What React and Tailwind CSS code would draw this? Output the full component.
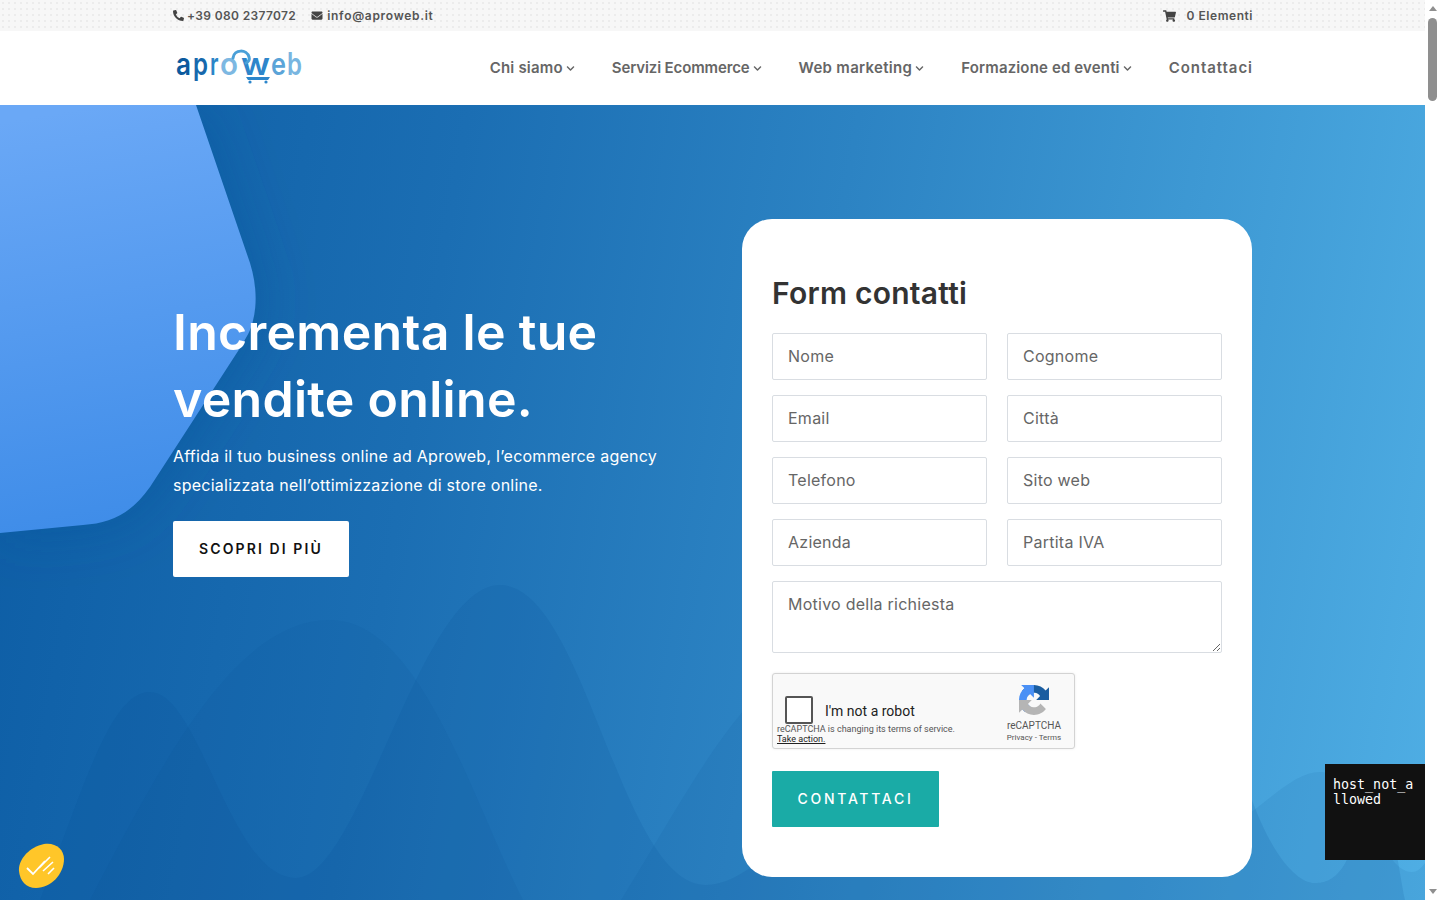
import { FaChevronDown, FaEnvelope, FaPhoneAlt, FaShoppingCart } from "react-icons/fa";

const sans = "font-['Inter','Liberation_Sans',sans-serif]";

const navItems = [
  { label: "Chi siamo", menu: true, spacing: "tracking-[0.2px]" },
  { label: "Servizi Ecommerce", menu: true, spacing: "tracking-[-0.12px]" },
  { label: "Web marketing", menu: true, spacing: "tracking-[0.3px]" },
  { label: "Formazione ed eventi", menu: true, spacing: "tracking-[0.15px]" },
  { label: "Contattaci", menu: false, spacing: "tracking-[0.95px]" },
];

const fieldRows = [
  ["Nome", "Cognome"],
  ["Email", "Città"],
  ["Telefono", "Sito web"],
  ["Azienda", "Partita IVA"],
];

const logoLetters = [
  { ch: "a", x: 1, len: 15, fill: "#0b5a9e" },
  { ch: "p", x: 18, len: 15, fill: "#1769ad" },
  { ch: "r", x: 35, len: 8.5, fill: "#2b86c8" },
  { ch: "o", x: 45, len: 18, fill: "#7db8e2" },
  { ch: "w", x: 66, len: 29, fill: "#2e86cb" },
  { ch: "e", x: 96, len: 15, fill: "#5ba4d8" },
  { ch: "b", x: 112, len: 15, fill: "#78b5e0" },
];

const fieldClass =
  "border border-[#d9dde2] rounded-[2px] bg-white px-[15px] text-[16px] tracking-[0.25px] text-[#333] placeholder:text-[#666] outline-none";

function Logo() {
  return (
    <svg width="130" height="36" viewBox="0 0 130 36" className="block overflow-visible" aria-label="aproweb">
      {logoLetters.map((l) => (
        <text key={l.ch} x={l.x} y="26" fontFamily="Inter, sans-serif" fontSize="31" fontWeight="600" fill={l.fill} textLength={l.len} lengthAdjust="spacingAndGlyphs">
          {l.ch}
        </text>
      ))}
      <path d="M58 9 C59 0 72 0 74 8 C75 11 73 13 71 14" fill="none" stroke="#4aa0d8" strokeWidth="3" strokeLinecap="round" />
      <path d="M71 28 H95 L93 31 H73 Z" fill="#2c86cb" />
      <circle cx="75" cy="33" r="1.6" fill="#2c86cb" />
      <circle cx="91" cy="33" r="1.6" fill="#2c86cb" />
    </svg>
  );
}

function RecaptchaMark() {
  return (
    <svg width="30" height="30" viewBox="0 0 64 64" className="block">
      <path d="M64 31.955l-.033-1.37V4.687l-7.16 7.16C50.948 4.674 42.033.093 32.05.093c-10.4 0-19.622 4.96-25.458 12.64l11.736 11.86a15.55 15.55 0 0 1 4.754-5.334c2.05-1.6 4.952-2.906 8.968-2.906.485 0 .86.057 1.135.163 4.976.393 9.29 3.14 11.83 7.125l-8.307 8.307 32.29-.002" fill="#1a5da0" />
      <path d="M31.862 0l-1.37.033H4.594l7.16 7.16C4.58 13.052 0 21.967 0 31.95c0 10.4 4.96 19.622 12.64 25.458l11.86-11.736a15.55 15.55 0 0 1-5.334-4.754c-1.6-2.05-2.906-4.952-2.906-8.968 0-.485.057-.86.163-1.135.393-4.976 3.14-9.29 7.125-11.83l8.307 8.307L31.862 0" fill="#4a90f5" />
      <path d="M.001 31.955l.033 1.37v25.9l7.16-7.16c5.858 7.172 14.774 11.753 24.757 11.753 10.4 0 19.622-4.96 25.458-12.64l-11.736-11.86a15.55 15.55 0 0 1-4.754 5.334c-2.05 1.6-4.952 2.906-8.968 2.906-.485 0-.86-.057-1.135-.163-4.976-.393-9.29-3.14-11.83-7.125l8.307-8.307-32.29.002" fill="#b5b5b5" />
    </svg>
  );
}

function Recaptcha() {
  return (
    <div className="mt-5 flex h-[76px] w-[303px] justify-between rounded-[3px] border border-[#d3d3d3] bg-[#f9f9f9] font-['Roboto',sans-serif] shadow-[0_0_3px_rgba(0,0,0,0.08)]">
      <div className="flex flex-col pl-[4px] pt-[22px]">
        <div className="ml-[8px] flex items-center gap-[12px]">
          <div className="h-[28px] w-[28px] rounded-[2px] border-2 border-[#555] bg-white" />
          <span className="pt-[2px] text-[14px] leading-[17px] text-[#222]">I'm not a robot</span>
        </div>
        <p className="text-[9px] leading-[10px] text-[#555]">
          reCAPTCHA is changing its terms of service.
          <br />
          <span className="text-[#222] underline">Take action.</span>
        </p>
      </div>
      <div className="flex w-[80px] flex-col items-center pt-[11px]">
        <RecaptchaMark />
        <span className="mt-[5px] text-[10px] leading-[12px] text-[#555]">reCAPTCHA</span>
        <span className="text-[8px] leading-[11px] text-[#555]">Privacy - Terms</span>
      </div>
    </div>
  );
}

function ContactCard() {
  return (
    <div className="flex h-[658px] w-[510px] shrink-0 flex-col rounded-[30px] bg-white px-[30px] pt-[55px]">
      <h2 className="text-[30px] leading-[38px] font-semibold tracking-[0.25px] text-[#333]">Form contatti</h2>
      <div className="mt-[21px] flex flex-col gap-[15px]">
        {fieldRows.map((row) => (
          <div key={row[0]} className="grid grid-cols-2 gap-5">
            {row.map((name) => (
              <input key={name} placeholder={name} className={`h-[47px] w-full pb-[2px] ${fieldClass}`} />
            ))}
          </div>
        ))}
        <textarea placeholder="Motivo della richiesta" className={`h-[72px] w-full pt-[10px] pb-[12px] leading-[24px] ${fieldClass}`} />
      </div>
      <Recaptcha />
      <button className="mt-[22px] h-14 w-[167px] rounded-[1px] bg-[#1aaba6] pb-[1px] text-[14px] font-medium tracking-[2.7px] text-white">
        CONTATTACI
      </button>
    </div>
  );
}

function HeroBackdrop() {
  const blob = "M0 0 H196 L250 158 C257 180 258 205 250 225 C248 230 244 236 240 243 L150 382 C130 410 110 418 83 420 L0 428 Z";
  return (
    <svg className="absolute inset-0 h-full w-full" viewBox="0 0 1425 795" preserveAspectRatio="none">
      <defs>
        <linearGradient id="blob" x1="0.4" x2="0.5" y1="0" y2="1">
          <stop offset="0" stopColor="#6aa8f6" />
          <stop offset="1" stopColor="#3e8ce8" />
        </linearGradient>
        <filter id="blobShadow" x="-30%" y="-30%" width="170%" height="170%">
          <feGaussianBlur stdDeviation="25" />
        </filter>
      </defs>
      <path d="M40 795 C85 680 110 587 150 587 C200 587 230 773 296 773 C360 773 420 480 500 480 C585 480 620 780 706 780 C770 780 850 640 950 620 C1080 600 1190 650 1252 695 C1270 745 1295 778 1315 778 C1335 778 1350 765 1365 700 C1372 668 1380 668 1388 700 C1394 730 1400 770 1405 795 Z" fill="#0b4f8f" fillOpacity="0.13" />
      <path d="M90 795 C170 640 240 515 330 515 C420 515 470 690 523 795 H621 C680 700 725 610 790 560 C900 500 1100 690 1240 715 C1270 695 1295 667 1320 667 C1360 667 1380 767 1412 767 C1418 767 1422 762 1425 758 V795 Z" fill="#0b4f8f" fillOpacity="0.09" />
      <path d={blob} fill="#0c4f96" fillOpacity="0.35" filter="url(#blobShadow)" transform="translate(6 4)" />
      <path d={blob} fill="url(#blob)" />
    </svg>
  );
}

function Scrollbar() {
  return (
    <div className="flex w-[15px] shrink-0 flex-col items-center bg-white">
      <div className="mt-[6px] h-0 w-0 border-x-[4px] border-b-[5px] border-x-transparent border-b-[#8f8f8f]" />
      <div className="mt-[7px] h-[83px] w-[9px] rounded-[5px] bg-[#8f8f8f]" />
      <div className="mt-auto mb-[6px] h-0 w-0 border-x-[4px] border-t-[5px] border-x-transparent border-t-[#8f8f8f]" />
    </div>
  );
}

export default function App() {
  return (
    <div className={`relative flex h-[900px] w-[1440px] overflow-hidden bg-white ${sans}`}>
      <div className="flex w-[1425px] flex-col">
        <div className="h-[31px] shrink-0 bg-[#f7f7f7] bg-[radial-gradient(#ececec_1px,transparent_1px)] bg-[size:6px_6px]">
          <div className="ml-[173px] flex h-full w-[1080px] items-center justify-between text-[12px] font-semibold text-[#555]">
            <div className="flex items-center gap-[15px]">
              <span className="flex items-center gap-[3px] tracking-[0.35px]">
                <FaPhoneAlt className="h-[11px] w-[11px] text-[#444]" />
                +39 080 2377072
              </span>
              <span className="flex items-center gap-[4px] tracking-[0.7px]">
                <FaEnvelope className="h-[11px] w-[12px] text-[#444]" />
                info@aproweb.it
              </span>
            </div>
            <span className="flex items-center gap-[10px] tracking-[0.55px]">
              <FaShoppingCart className="h-[12px] w-[13px] text-[#444]" />
              0 Elementi
            </span>
          </div>
        </div>

        <header className="h-[74px] shrink-0 bg-white">
          <div className="ml-[173px] flex h-full w-[1080px] items-center justify-between">
            <div className="mt-[-2px] ml-[2px]">
              <Logo />
            </div>
            <nav className="flex items-center gap-[37px] text-[15px] font-semibold text-[#666]">
              {navItems.map((item) => (
                <a key={item.label} className={`flex items-center gap-[3px] ${item.spacing}`}>
                  {item.label}
                  {item.menu && <FaChevronDown className="h-[9px] w-[9px]" />}
                </a>
              ))}
            </nav>
          </div>
        </header>

        <section className="relative min-h-0 flex-1 overflow-hidden bg-[linear-gradient(100deg,#0c5ca4_0%,#1b6eb3_30%,#2c83c3_55%,#4faee4_100%)]">
          <HeroBackdrop />
          <div className="relative ml-[173px] flex w-[1079px] items-start justify-between pt-[114px]">
            <div className="w-[500px] pt-[80px] text-white">
              <h1 className="text-[50px] leading-[67px] font-semibold tracking-[0.3px]">Incrementa le tue vendite online.</h1>
              <p className="mt-[9px] text-[16px] leading-[29px] tracking-[0.25px]">
                Affida il tuo business online ad Aproweb, l’ecommerce agency specializzata nell’ottimizzazione di store online.
              </p>
              <button className="mt-[21px] block h-14 w-[176px] rounded-[2px] bg-white pb-[2px] text-[14px] font-semibold tracking-[2.1px] text-[#111]">
                SCOPRI DI PIÙ
              </button>
            </div>
            <ContactCard />
          </div>
        </section>
      </div>

      <Scrollbar />

      <div className="absolute left-[1325px] top-[764px] h-[96px] w-[100px] break-all bg-[#111] p-[8px] pt-[13px] font-['DejaVu_Sans_Mono',monospace] text-[13.33px] leading-[15px] text-white">
        host_not_allowed
      </div>

      <svg className="absolute left-[17px] top-[843px]" width="48" height="46" viewBox="0 0 48 46">
        <path d="M2 28 C1 17 12 4 27 1 C38 -1 47 6 47 16 C47 31 34 45 19 45 C9 45 3 38 2 28 Z" fill="#ffc629" />
        <path d="M10 25 L16 31 L28 18" fill="none" stroke="#fff" strokeWidth="1.8" />
        <path d="M22 25 L33 14 M26 28 L36 19 M31 31 L37 25" fill="none" stroke="#fff" strokeWidth="1.6" />
      </svg>
    </div>
  );
}
